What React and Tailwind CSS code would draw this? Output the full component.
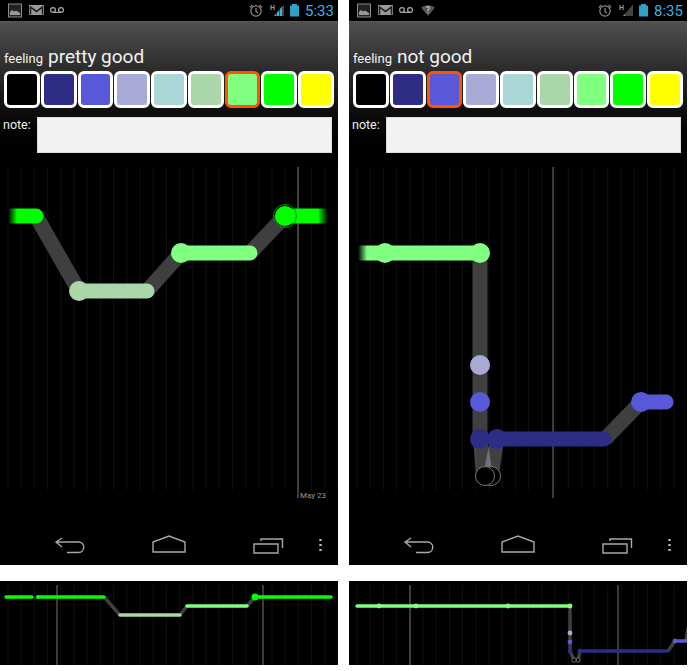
import React from 'react';

const COLORS = ['#000000', '#2d2d85', '#5858d8', '#aaaad6', '#aad6d6', '#aad6aa', '#80ff80', '#00ff00', '#ffff00'];
const GRAY = '#3f3f3f';

const range = (from, to, step) => {
  const out = [];
  for (let x = from; x < to; x += step) out.push(x);
  return out;
};

const StatusIcons = ({ wifi, signal }) => (
  <svg width="338" height="21" viewBox="0 0 338 21" className="block">
    {/* picture */}
    <rect x="8.5" y="4" width="13" height="13" fill="#222" stroke="#8a8a8a" strokeWidth="1" />
    <path d="M10 15v-3l2-2 2 1.5 2-1 4 2.5v2z" fill="#999" />
    {/* gmail */}
    <rect x="29" y="5" width="15" height="10" fill="#9a9a9a" />
    <path d="M30.5 14.5V7l6 4.5 6-4.5v7.5" fill="none" stroke="#222" strokeWidth="1.6" />
    {/* voicemail */}
    <circle cx="53" cy="10" r="2.4" fill="none" stroke="#aaa" strokeWidth="1.2" />
    <circle cx="61" cy="10" r="2.4" fill="none" stroke="#aaa" strokeWidth="1.2" />
    <path d="M53 12.4h8" stroke="#aaa" strokeWidth="1.2" />
    {wifi && (
      <g>
        <path d="M72 7.5a12 12 0 0 1 14 0l-7 8.5z" fill="#555" />
        <text x="79" y="13" fontSize="9" fontWeight="700" fill="#bbb" textAnchor="middle" fontFamily="Roboto, sans-serif">?</text>
      </g>
    )}
    {/* alarm */}
    <circle cx="256" cy="11" r="5.2" fill="none" stroke="#8c8c8c" strokeWidth="1.2" />
    <path d="M256 8v3.4l2 1.6M250 7.5l2.4-2.5M262 7.5l-2.4-2.5" fill="none" stroke="#8c8c8c" strokeWidth="1.2" />
    {/* signal */}
    <text x="270" y="10" fontSize="7" fontWeight="700" fill="#9a9a9a" fontFamily="Roboto, sans-serif">H</text>
    <path d="M274 16 284 4.500V16z" fill="#444" />
    {signal === 'full' ? (
      <g fill="#33b5e5">
        <path d="M274 16l2-2v2zM277 16v-3.500l2-2V16zM280 16V9l2-2.500V16z" />
      </g>
    ) : (
      <path d="M274 16l2-2v2z" fill="#33b5e5" />
    )}
    {/* battery */}
    <rect x="292" y="4" width="5" height="2" fill="#33a0c8" />
    <rect x="290" y="5.500" width="9" height="11" fill="#33a0c8" />
  </svg>
);

const NavBar = () => (
  <div className="flex-1 bg-black">
    <svg width="338" height="60" viewBox="0 505 338 60" className="block" fill="none" stroke="#a8a8a8" strokeWidth="1.4">
      <path d="M62 538l-6 4 6 5M56 542h22.500c7 0 7 10.500 0 10.500H67" />
      <path d="M153 552v-10l16-6 16 6v10z" />
      <path d="M254 544h24v9h-24zM261 541v-2h21.500v9" />
      <path d="M320.500 539v2M320.500 544v2M320.500 549v2" strokeWidth="2.400" stroke="#bbb" />
    </svg>
  </div>
);

const Chart = ({ ox, bands, wedges = [], segments, dots, hollow, ring, dateX, label, fade }) => (
  <svg width="338" height="338" viewBox={`${ox} 167 338 338`} className="block">
    <defs>
      <linearGradient id={`fl${ox}`} x1="0" x2="1" y1="0" y2="0">
        <stop offset="0" stopColor="#000" />
        <stop offset="1" stopColor="#000" stopOpacity="0" />
      </linearGradient>
      <linearGradient id={`fr${ox}`} x1="0" x2="1" y1="0" y2="0">
        <stop offset="0" stopColor="#000" stopOpacity="0" />
        <stop offset="1" stopColor="#000" />
      </linearGradient>
    </defs>
    {range(ox + 8, ox + 338, 13.2).map((x) => (
      <line key={x} x1={x} x2={x} y1="167" y2="490" stroke="#101010" strokeWidth="1" />
    ))}
    <line x1={dateX} x2={dateX} y1="167" y2="498" stroke="#777" strokeWidth="1" />
    {label && (
      <text x={dateX + 2} y="498" fontSize="8" fill="#999" fontFamily="Roboto, sans-serif">{label}</text>
    )}
    {bands.map((b, i) => (
      <polyline key={i} points={b} fill="none" stroke={GRAY} strokeWidth="15" />
    ))}
    {wedges.map((w, i) => (
      <polygon key={i} points={w} fill="#ffffff" fillOpacity="0.25" />
    ))}
    {hollow.map((x) => (
      <circle key={x} cx={x} cy="476" r="9.500" fill="#000" stroke="#777" strokeWidth="1" />
    ))}
    {segments.map(([x1, x2, y, c], i) => (
      <line key={i} x1={x1} x2={x2} y1={y} y2={y} stroke={c} strokeWidth="15" strokeLinecap="round" />
    ))}
    {/* square, faded ends of the line */}
    {fade.left && (
      <g>
        <rect x={fade.left[0] - 8} y={fade.left[1] - 9} width="8" height="18" fill="#000" />
        <rect x={fade.left[0]} y={fade.left[1] - 9} width="9" height="18" fill={`url(#fl${ox})`} />
      </g>
    )}
    {fade.right && (
      <g>
        <rect x={fade.right[0] - 10} y={fade.right[1] - 9} width="10" height="18" fill={`url(#fr${ox})`} />
        <rect x={fade.right[0]} y={fade.right[1] - 9} width="8" height="18" fill="#000" />
      </g>
    )}
    {dots.map(([x, y, c], i) => (
      <circle key={i} cx={x} cy={y} r="10" fill={c} />
    ))}
    {ring && <circle cx={ring[0]} cy={ring[1]} r="11.500" fill="none" stroke="#008a00" strokeWidth="1" />}
  </svg>
);

const Strip = ({ ox, bands, segments, dots, hollow, dates }) => (
  <svg width="338" height="84" viewBox={`${ox} 581 338 84`} className="block bg-black">
    {range(ox + 8, ox + 338, 13.2).map((x) => (
      <line key={x} x1={x} x2={x} y1="585" y2="665" stroke="#101010" strokeWidth="1" />
    ))}
    {dates.map((x) => (
      <line key={x} x1={x} x2={x} y1="585" y2="665" stroke="#777" strokeWidth="1" />
    ))}
    {bands.map((b, i) => (
      <polyline key={i} points={b} fill="none" stroke={GRAY} strokeWidth="3.500" />
    ))}
    {hollow.map((x) => (
      <circle key={x} cx={x} cy="660" r="2.200" fill="#000" stroke="#888" strokeWidth="0.800" />
    ))}
    {segments.map(([x1, x2, y, c], i) => (
      <line key={i} x1={x1} x2={x2} y1={y} y2={y} stroke={c} strokeWidth="3.500" strokeLinecap="round" />
    ))}
    {dots.map(([x, y, c, r], i) => (
      <circle key={i} cx={x} cy={y} r={r || 2.400} fill={c} />
    ))}
  </svg>
);

const Phone = ({ time, mood, selected, wifi, signal, chart, strip }) => (
  <div className="flex flex-col w-[338px] gap-[16px]" style={{ fontFamily: 'Roboto, sans-serif' }}>
    <div className="flex flex-col h-[565px] bg-black text-white">
      {/* status bar */}
      <div className="relative h-[21px] bg-black">
        <StatusIcons wifi={wifi} signal={signal} />
        <span className="absolute left-[305px] top-[1px] text-[15px] leading-[20px] text-[#33b5e5]">{time}</span>
      </div>
      {/* header */}
      <div className="h-[146px] bg-gradient-to-b from-[#505050] to-[#000000] border-t border-[#5a5a5a]">
        <div className="flex items-baseline gap-[5px] pl-[4px] pt-[24px] leading-[22px] text-[#f2f2f2]">
          <span className="text-[13px]">feeling</span>
          <span className="text-[19px]">{mood}</span>
        </div>
        <div className="grid grid-cols-9 gap-[1px] w-[330px] ml-[4px] mt-[1px]">
          {COLORS.map((c, i) => (
            <div
              key={c}
              className={`h-[37px] rounded-[6px] border-[3px] ${i === selected ? 'border-[#ff5500]' : 'border-white'}`}
              style={{ backgroundColor: c }}
            />
          ))}
        </div>
        <div className="flex mt-[9px] pl-[3px]">
          <span className="w-[34px] text-[12.5px] leading-[16px] text-[#eeeeee]">note:</span>
          <div className="w-[295px] h-[36px] bg-[#f2f2f2] border border-[#dddddd]" />
        </div>
      </div>
      <Chart {...chart} />
      <NavBar />
    </div>
    <Strip {...strip} />
  </div>
);

const left = {
  time: '5:33',
  mood: 'pretty good',
  selected: 6,
  signal: 'full',
  chart: {
    ox: 0,
    dateX: 298,
    label: 'May 23',
    bands: ['36,216 79,291', '147,291 181,253', '250,253 285,216'],
    hollow: [],
    ring: [285, 216],
    segments: [
      [8, 36, 216, '#00ff00'],
      [79, 147, 291, '#aad6aa'],
      [181, 250, 253, '#80ff80'],
      [285, 328, 216, '#00ff00'],
    ],
    dots: [
      [79, 291, '#aad6aa'],
      [181, 253, '#80ff80'],
      [285, 216, '#00ff00'],
    ],
    fade: { left: [8, 216], right: [328, 216] },
  },
  strip: {
    ox: 0,
    dates: [57, 263],
    bands: ['104,597 120,615', '180,615 187,606', '247,606 255,597'],
    hollow: [],
    segments: [
      [6, 32, 597, '#00ff00'],
      [38, 104, 597, '#00ff00'],
      [120, 180, 615, '#aad6aa'],
      [187, 247, 606, '#80ff80'],
      [255, 331, 597, '#00ff00'],
    ],
    dots: [
      [38, 597, '#00ff00', 2],
      [255, 597, '#00ff00', 3.4],
    ],
  },
};

const right = {
  time: '8:35',
  mood: 'not good',
  selected: 2,
  wifi: true,
  signal: 'low',
  chart: {
    ox: 349,
    dateX: 553,
    bands: ['480,253 480,439', '605,439 641,402'],
    wedges: ['473,439 487,439 493,476 476,476', '490,439 504,439 499,476 483,476'],
    hollow: [491, 485],
    segments: [
      [358, 480, 253, '#80ff80'],
      [497, 604, 439, '#2d2d85'],
      [641, 666, 402, '#5858d8'],
    ],
    dots: [
      [385, 253, '#80ff80'],
      [480, 253, '#80ff80'],
      [480, 365, '#aaaad6'],
      [480, 402, '#5858d8'],
      [480, 439, '#2d2d85'],
      [497, 439, '#2d2d85'],
      [641, 402, '#5858d8'],
    ],
    fade: { left: [358, 253] },
  },
  strip: {
    ox: 349,
    dates: [410, 618],
    bands: ['570,606 570,651 574,660', '578,660 580,651', '668,651 675,641', '686,641 688,628'],
    hollow: [578, 574],
    segments: [
      [357, 570, 606, '#80ff80'],
      [580, 668, 651, '#2d2d85'],
      [676, 688, 641, '#5858d8'],
    ],
    dots: [
      [379, 606, '#80ff80'],
      [416, 606, '#80ff80'],
      [508, 606, '#80ff80'],
      [570, 606, '#80ff80'],
      [570, 633, '#aaaad6'],
      [570, 642, '#5858d8'],
      [570, 651, '#2d2d85'],
      [580, 651, '#2d2d85'],
      [675, 641, '#5858d8'],
    ],
  },
};

const App = () => {
  return (
    <div className="flex gap-[11px] w-[696px] h-[671px] bg-white overflow-hidden">
      <Phone {...left} />
      <Phone {...right} />
    </div>
  );
};

export default App;
